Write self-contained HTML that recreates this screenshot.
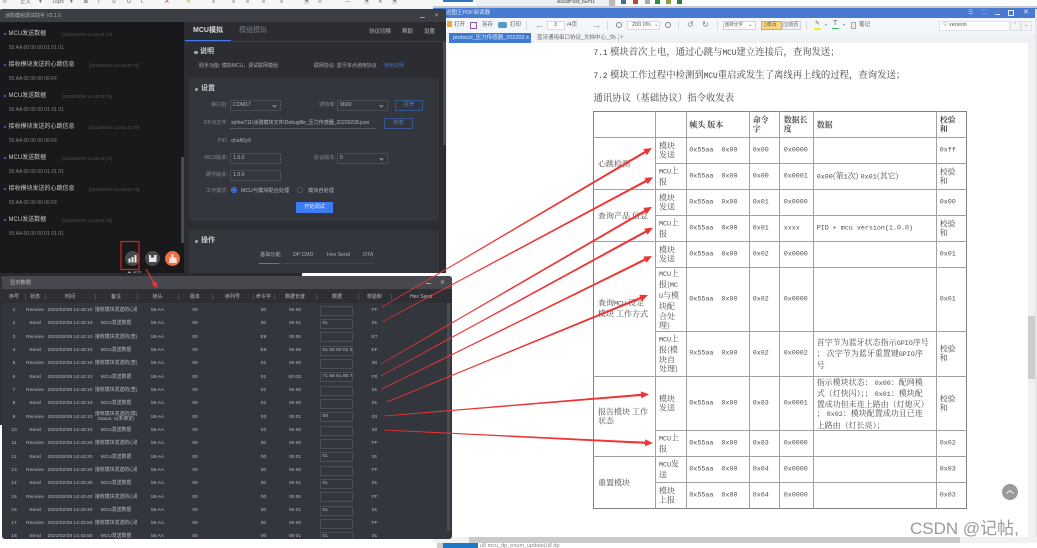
<!DOCTYPE html>
<html lang="zh"><head><meta charset="utf-8"><title>Debug</title>
<style>
html,body{margin:0;padding:0;background:#fff;width:1037px;height:548px;overflow:hidden}
#w{position:relative;width:1037px;height:548px;overflow:hidden;font-family:"Liberation Sans","Noto Sans CJK SC",sans-serif;filter:blur(.35px)}
.a{position:absolute;white-space:nowrap;line-height:10px}
.r{position:absolute}
.l{font-size:6px;color:#c8c8c8}
.t{font-size:4.5px;color:#555}
.x{font-size:5px;color:#858585;left:9px}
.dot{position:absolute;left:3.5px;width:2.4px;height:2.4px;border-radius:50%;background:#3f7bf5}
.f{font-size:5.5px;color:#a8abb0}
.lb{font-size:5.2px;color:#85888d;text-align:right;width:50px}
.h{font-size:7px;font-weight:bold;color:#ccc}
.d{position:absolute;width:3.5px;height:3.5px;background:#aaa;border-radius:50%}
.in{position:absolute;border:1px solid #4a4d54;color:#b5b8bc;font-size:5.2px;line-height:9px;padding-left:2px;box-sizing:border-box;height:11px}
.sel::after{content:"";position:absolute;right:4px;top:2.5px;width:2px;height:2px;border-right:1px solid #999;border-bottom:1px solid #999;transform:rotate(45deg)}
.btn{position:absolute;border:1px solid #35578f;box-sizing:border-box;color:#5c86d0;font-size:5.2px;text-align:center;line-height:9px}
.c{position:absolute;width:15px;height:15px;border-radius:50%;background:#48494c}
.ti{font-size:5.5px;color:#666}
.pt{font-size:5.5px;color:#555}
table{border-collapse:collapse;table-layout:fixed}
#dt{position:absolute;left:0;top:0;font-size:4.9px;color:#b9bcc0}
#dt td{height:13.33px;padding:0;text-align:center;white-space:nowrap;overflow:hidden;line-height:5.5px}
#dt tr{height:13.33px}
#dt b{display:block;font-weight:normal;width:33px;height:10px;margin:0 0 0 4px;border:1px solid #4b4e55;box-sizing:border-box;text-align:left;line-height:8px;padding-left:1.5px;overflow:hidden}
.hd{position:absolute;font-size:5px;color:#b9bcc0;text-align:center;line-height:10px;top:292px}
.sp{position:absolute;top:294px;width:1px;height:6px;background:#4b4e55}
.v{position:absolute;top:111px;height:398px;width:1px;background:#a0a0a0}
.hl{position:absolute;left:593px;width:374px;height:1px;background:#a0a0a0}
.hp{position:absolute;left:655px;width:312px;height:1px;background:#a0a0a0}
#pg{font-family:"Noto Serif CJK SC","Liberation Serif",serif;font-size:8px;color:#4c4c4c}
.rw{position:absolute;left:0;width:1037px}
.rw>span{position:absolute;top:calc(50% + .5px);transform:translateY(-50%);white-space:pre;line-height:9.3px}
#pg i{font-family:"Liberation Mono",monospace;font-style:normal;font-size:6.7px}
.m{font-family:"Liberation Mono",monospace;font-size:6.7px}
.c1{left:598px}.c2{left:659px}.c3{left:689.3px}.c4{left:752.7px}.c5{left:783.7px}.c6{left:816.7px}.c7{left:939.7px}
.p{position:absolute;left:593.5px;font-family:"Noto Serif CJK SC","Liberation Serif",serif;font-size:9.4px;color:#444;line-height:12px;white-space:nowrap}
.p i{font-family:"Liberation Mono",monospace;font-style:normal;font-size:7.8px}
</style></head><body><div id="w">

<!-- Word toolbar behind -->
<div class="r" style="left:0;top:0;width:440px;height:10px;background:#f6f6f6"></div>
<span class="a ti" style="left:2px;top:-3px">※</span>
<span class="a ti" style="left:20px;top:-3px">正文</span><span class="a ti" style="left:39px;top:-3px">▾</span>
<span class="a ti" style="left:52px;top:-3px">15px</span><span class="a ti" style="left:70px;top:-3px">▾</span>
<span class="a ti" style="left:84px;top:-3px;font-weight:bold">B</span><span class="a ti" style="left:98px;top:-3px;font-style:italic">I</span>
<span class="a ti" style="left:112px;top:-3px">S</span><span class="a ti" style="left:127px;top:-3px">U</span><span class="a ti" style="left:141px;top:-3px">I.</span>
<span class="a ti" style="left:165px;top:-3px;color:#c44">A</span><span class="a ti" style="left:186px;top:-3px;color:#b90">✎</span>
<span class="a ti" style="left:212px;top:-3px">≡</span><span class="a ti" style="left:232px;top:-3px">≡</span><span class="a ti" style="left:246px;top:-3px">≡</span><span class="a ti" style="left:262px;top:-3px">≡</span><span class="a ti" style="left:280px;top:-3px">≡</span>
<span class="a ti" style="left:304px;top:-3px">▣</span><span class="a ti" style="left:318px;top:-3px">∞</span><span class="a ti" style="left:332px;top:-3px">“</span><span class="a ti" style="left:345px;top:-3px">—</span>
<span class="a ti" style="left:364px;top:-3px">▣</span><span class="a ti" style="left:378px;top:-3px">✕</span><span class="a ti" style="left:392px;top:-3px">▣</span>

<!-- Keil toolbar -->
<div class="r" style="left:443px;top:0;width:30px;height:2px;background:#2f74c9"></div>
<div class="r" style="left:476px;top:0;width:140px;height:6px;background:#eceff3"></div>
<span class="a" style="left:557px;top:-3px;font-size:4.5px;color:#333">stm32F103_hw711</span>
<div class="r" style="left:609px;top:0;width:6px;height:6px;background:#bbb"></div>
<div class="r" style="left:621px;top:0;width:5px;height:4px;background:#47699e"></div>
<div class="r" style="left:633px;top:0;width:5px;height:4px;background:#b54a3a"></div>
<div class="r" style="left:645px;top:0;width:5px;height:4px;background:#aaa"></div>
<div class="r" style="left:655px;top:0;width:5px;height:4px;background:#2e8f3e"></div>
<div class="r" style="left:666px;top:0;width:5px;height:4px;background:#8aa040"></div>
<div class="r" style="left:677px;top:0;width:5px;height:4px;background:#2e7f4e"></div>

<!-- PDF window -->
<div class="r" style="left:433px;top:6px;width:604px;height:3px;background:#c8cace"></div>
<div class="r" style="left:433px;top:8px;width:604px;height:10px;background:#477ad0"></div>
<span class="a" style="left:446px;top:8px;font-size:5.5px;color:#dfe8f8">迅图王PDF阅读器</span>
<span class="a" style="left:968px;top:8px;font-size:6px;color:#bcd0f0">☰</span>
<span class="a" style="left:982px;top:8px;font-size:6px;color:#bcd0f0">⛶</span>
<div class="r" style="left:995px;top:14px;width:5px;height:1px;background:#cfdcf4"></div>
<div class="r" style="left:1008px;top:10px;width:6px;height:6px;border:1px solid #e5edfb;box-sizing:border-box"></div>
<span class="a" style="left:1023px;top:8px;font-size:7px;color:#e5edfb">✕</span>

<div class="r" style="left:433px;top:18px;width:604px;height:15px;background:#f3f6fa"></div>
<div class="r" style="left:433px;top:33px;width:604px;height:10px;background:#eef0f4"></div>
<div class="r" style="left:447px;top:21px;width:5px;height:6px;background:#e6a93c"></div>
<span class="a pt" style="left:454px;top:20px">打开</span>
<div class="r" style="left:470px;top:22px;width:7px;height:7px;border:1px solid #8a5ca8;box-sizing:border-box"></div>
<span class="a pt" style="left:482px;top:20px">另存</span>
<div class="r" style="left:498px;top:22px;width:9px;height:6px;background:#5a96c8;border-radius:2px"></div>
<span class="a pt" style="left:510px;top:20px">打印</span>
<div class="r" style="left:526px;top:21px;width:1px;height:9px;background:#d6d9de"></div>
<span class="a" style="left:535px;top:20px;font-size:9px;color:#888">←</span>
<div class="r" style="left:547px;top:21px;width:18px;height:9px;background:#fff;border:1px solid #d8dbe0;box-sizing:border-box"></div>
<span class="a pt" style="left:554px;top:20px">3</span>
<span class="a pt" style="left:567px;top:20px">/4页</span>
<span class="a" style="left:592px;top:20px;font-size:9px;color:#888">→</span>
<div class="r" style="left:607px;top:21px;width:1px;height:9px;background:#d6d9de"></div>
<div class="r" style="left:616px;top:22px;width:6px;height:6px;border:1px solid #888;border-radius:50%;box-sizing:border-box"></div>
<div class="r" style="left:627px;top:21px;width:33px;height:9px;background:#fff;border:1px solid #d8dbe0;box-sizing:border-box"></div>
<span class="a pt" style="left:632px;top:20px">200.0%</span><span class="a pt" style="left:654px;top:20px">⌄</span>
<div class="r" style="left:665px;top:22px;width:6px;height:6px;border:1px solid #888;border-radius:50%;box-sizing:border-box"></div>
<div class="r" style="left:678px;top:21px;width:1px;height:9px;background:#d6d9de"></div>
<span class="a" style="left:687px;top:20px;font-size:8px;color:#777">↺</span><span class="a" style="left:702px;top:20px;font-size:8px;color:#777">↻</span>
<div class="r" style="left:717px;top:21px;width:1px;height:9px;background:#d6d9de"></div>
<div class="r" style="left:723px;top:21px;width:33px;height:9px;background:#fff;border:1px solid #d0d3d8;box-sizing:border-box"></div>
<span class="a" style="left:725px;top:20px;font-size:4.5px;color:#555">图转文字</span><span class="a pt" style="left:748px;top:20px">⌄</span>
<div class="r" style="left:761px;top:21px;width:21px;height:9px;background:#fbd67c;border:1px solid #e0aa44;box-sizing:border-box"></div>
<span class="a" style="left:764px;top:20px;font-size:5px;color:#555">▯单页</span>
<div class="r" style="left:782px;top:21px;width:19px;height:9px;background:#eef0f3;border:1px solid #d0d3d8;box-sizing:border-box"></div>
<span class="a" style="left:783px;top:20px;font-size:5px;color:#666">▯▯双页</span>
<div class="r" style="left:806px;top:21px;width:1px;height:9px;background:#d6d9de"></div>
<div class="r" style="left:814px;top:28px;width:7px;height:2px;background:#f3ee20"></div>
<span class="a" style="left:815px;top:19px;font-size:6px;color:#666">✎</span><span class="a" style="left:825px;top:20px;font-size:4px;color:#888">▾</span>
<div class="r" style="left:832px;top:28px;width:7px;height:1px;background:#3fb85a"></div>
<span class="a" style="left:833px;top:19px;font-size:7px;color:#666">T</span><span class="a" style="left:843px;top:20px;font-size:4px;color:#888">▾</span>
<div class="r" style="left:851px;top:22px;width:5px;height:7px;background:#f6efcf;border:1px solid #aaa;box-sizing:border-box"></div>
<span class="a pt" style="left:859px;top:20px">笔记</span>
<div class="r" style="left:939px;top:21px;width:71px;height:10px;background:#fff;border:1px solid #dfe2e6;box-sizing:border-box"></div>
<span class="a" style="left:943px;top:20px;font-size:5.5px;color:#aaa">⚲</span>
<span class="a pt" style="left:949px;top:20px">version</span>
<div class="r" style="left:1010px;top:21px;width:11px;height:10px;background:#f3f4f6;border:1px solid #dfe2e6;box-sizing:border-box"></div>
<div class="r" style="left:1021px;top:21px;width:11px;height:10px;background:#f3f4f6;border:1px solid #dfe2e6;box-sizing:border-box"></div>
<span class="a" style="left:1013px;top:20px;font-size:5px;color:#999">⌃</span><span class="a" style="left:1024px;top:20px;font-size:5px;color:#999">⌄</span>

<div class="r" style="left:449px;top:33px;width:82px;height:10px;background:#3f7ad2"></div>
<span class="a" style="left:453px;top:33px;font-size:5.5px;color:#dfe9f8">protocol_压力传感器_202202…</span>
<span class="a" style="left:526px;top:33px;font-size:5px;color:#fff">×</span>
<div class="r" style="left:532px;top:33px;width:86px;height:10px;background:#f0f2f5;border-right:1px solid #d5d8dc"></div>
<span class="a" style="left:537px;top:33px;font-size:5.5px;color:#666">蓝牙通用串口协议_文档中心_文…</span>
<span class="a" style="left:613px;top:33px;font-size:5px;color:#666">×</span>
<span class="a" style="left:620px;top:33px;font-size:6px;color:#777">+</span>

<!-- Doc -->
<div class="r" style="left:433px;top:43px;width:14px;height:494px;background:#f0f0f0"></div>
<div class="p" style="top:45px"><i>7.1</i> 模块首次上电，通过心跳与<i>MCU</i>建立连接后，查询发送；</div>
<div class="p" style="top:68px"><i>7.2</i> 模块工作过程中检测到<i>MCU</i>重启或发生了离线再上线的过程，查询发送；</div>
<div class="p" style="top:91px">通讯协议（基础协议）指令收发表</div>

<div id="pg">
<i class="r" style="left:593px;top:111px;width:1px;height:398px;background:#808080"></i>
<i class="r" style="left:593px;top:111px;width:374px;height:1px;background:#808080"></i>
<i class="r" style="left:593px;top:508px;width:374px;height:1px;background:#808080"></i>
<i class="v" style="left:655px"></i><i class="v" style="left:686px"></i><i class="v" style="left:749px"></i><i class="v" style="left:779px"></i><i class="v" style="left:813px"></i><i class="v" style="left:936px"></i><i class="v" style="left:966px;background:#808080"></i>
<i class="hl" style="top:137px"></i><i class="hl" style="top:189px"></i><i class="hl" style="top:241px"></i><i class="hl" style="top:376px"></i><i class="hl" style="top:456px"></i>
<i class="hp" style="top:163px"></i><i class="hp" style="top:215px"></i><i class="hp" style="top:267px"></i><i class="hp" style="top:331px"></i><i class="hp" style="top:430px"></i><i class="hp" style="top:482px"></i>

<div class="rw" style="top:111px;height:26px;font-weight:bold"><span class="c3">帧头 版本</span><span class="c4">命令
字</span><span class="c5">数据长
度</span><span class="c6">数据</span><span class="c7">校验
和</span></div>

<div class="rw" style="top:137px;height:52px"><span class="c1">心跳检测</span></div>
<div class="rw" style="top:189px;height:52px"><span class="c1">查询产品 信息</span></div>
<div class="rw" style="top:241px;height:135px"><span class="c1">查询<i>MCU</i> 设定
模块 工作方式</span></div>
<div class="rw" style="top:376px;height:80px"><span class="c1">报告模块 工作
状态</span></div>
<div class="rw" style="top:456px;height:52px"><span class="c1">重置模块</span></div>

<div class="rw" style="top:137px;height:26px"><span class="c2">模块
发送</span><span class="c3 m">0x55aa  0x00</span><span class="c4 m">0x00</span><span class="c5 m">0x0000</span><span class="c7 m">0xff</span></div>
<div class="rw" style="top:163px;height:26px"><span class="c2"><i>MCU</i>上
报</span><span class="c3 m">0x55aa  0x00</span><span class="c4 m">0x00</span><span class="c5 m">0x0001</span><span class="c6"><i>0x00</i>(第<i>1</i>次) <i>0x01</i>(其它)</span><span class="c7">校验
和</span></div>
<div class="rw" style="top:189px;height:26px"><span class="c2">模块
发送</span><span class="c3 m">0x55aa  0x00</span><span class="c4 m">0x01</span><span class="c5 m">0x0000</span><span class="c7 m">0x00</span></div>
<div class="rw" style="top:215px;height:26px"><span class="c2"><i>MCU</i>上
报</span><span class="c3 m">0x55aa  0x00</span><span class="c4 m">0x01</span><span class="c5 m">xxxx</span><span class="c6 m">PID + mcu version(1.0.0)</span><span class="c7">校验
和</span></div>
<div class="rw" style="top:241px;height:26px"><span class="c2">模块
发送</span><span class="c3 m">0x55aa  0x00</span><span class="c4 m">0x02</span><span class="c5 m">0x0000</span><span class="c7 m">0x01</span></div>
<div class="rw" style="top:267px;height:64px"><span class="c2"><i>MCU</i>上
报(<i>MC</i>
<i>U</i>与模
块配
合处
理)</span><span class="c3 m">0x55aa  0x00</span><span class="c4 m">0x02</span><span class="c5 m">0x0000</span><span class="c7 m">0x01</span></div>
<div class="rw" style="top:331px;height:45px"><span class="c2"><i>MCU</i>上
报(模
块自
处理)</span><span class="c3 m">0x55aa  0x00</span><span class="c4 m">0x02</span><span class="c5 m">0x0002</span><span class="c6">首字节为蓝牙状态指示<i>GPIO</i>序号
； 次字节为蓝牙重置键<i>GPIO</i>序
号</span><span class="c7">校验
和</span></div>
<div class="rw" style="top:376px;height:54px"><span class="c2">模块
发送</span><span class="c3 m">0x55aa  0x00</span><span class="c4 m">0x03</span><span class="c5 m">0x0001</span><span class="c6">指示模块状态： <i>0x00</i>：配网模
式（灯快闪）；； <i>0x01</i>：模块配
置成功但未连上路由（灯熄灭）
； <i>0x02</i>：模块配置成功且已连
上路由（灯长亮）；</span><span class="c7">校验
和</span></div>
<div class="rw" style="top:430px;height:26px"><span class="c2"><i>MCU</i>上
报</span><span class="c3 m">0x55aa  0x00</span><span class="c4 m">0x03</span><span class="c5 m">0x0000</span><span class="c7 m">0x02</span></div>
<div class="rw" style="top:456px;height:26px"><span class="c2"><i>MCU</i>发
送</span><span class="c3 m">0x55aa  0x00</span><span class="c4 m">0x04</span><span class="c5 m">0x0000</span><span class="c7 m">0x03</span></div>
<div class="rw" style="top:482px;height:26px"><span class="c2">模块
上报</span><span class="c3 m">0x55aa  0x00</span><span class="c4 m">0x04</span><span class="c5 m">0x0000</span><span class="c7 m">0x03</span></div>
</div>

<!-- PDF scrollbars etc -->
<div class="r" style="left:1028px;top:43px;width:7px;height:499px;background:#f1f1f1"></div>
<div class="r" style="left:1028px;top:316px;width:7px;height:63px;background:#cdcdcd"></div>
<div class="r" style="left:1035px;top:9px;width:2px;height:533px;background:#e4e6ea"></div>
<div class="r" style="left:1002px;top:484px;width:16px;height:16px;border-radius:50%;background:#9a9a9a"></div>
<svg class="r" style="left:1002px;top:484px" width="16" height="16"><path d="M4.5 9.5 L8 6.5 L11.5 9.5" fill="none" stroke="#e8e8e8" stroke-width="1.2"/></svg>
<div class="r" style="left:433px;top:537px;width:604px;height:6px;background:#f1f1f1"></div>
<div class="r" style="left:469px;top:537px;width:491px;height:6px;background:#cacaca"></div>
<div class="r" style="left:443px;top:543px;width:35px;height:5px;background:#1e78c8"></div>
<div class="r" style="left:437px;top:543px;width:6px;height:5px;background:#ccc"></div>
<span class="a" style="left:480px;top:541px;font-size:5.5px;color:#888">u8 mcu_dp_enum_update(u8 dp</span>
<span class="a" style="left:910px;top:517px;font-size:17px;line-height:24px;color:#9a9a9a;font-family:'Liberation Sans','Noto Sans CJK SC',sans-serif">CSDN @记帖,</span>

<!-- Window 1 -->
<div class="r" style="left:0;top:10px;width:446px;height:263px;background:#2b2d33"></div>
<div class="r" style="left:0;top:9px;width:446px;height:13px;background:#3b3e44;border-radius:2px 2px 0 0"></div>
<span class="a" style="left:5px;top:11px;font-size:5px;color:#b0b3b8">涂鸦模组调试助手 V2.1.6</span>
<div class="r" style="left:420px;top:17px;width:5px;height:1px;background:#999"></div>
<span class="a" style="left:434px;top:11px;font-size:6px;color:#999">✕</span>
<div class="r" style="left:0;top:22px;width:184px;height:251px;background:#19191b"></div>
<div class="r" style="left:181px;top:157px;width:3px;height:86px;background:#4a4a4c"></div>

<i class="dot" style="top:33px"></i><span class="a l" style="left:8.5px;top:29px">MCU发送数据</span><span class="a t" style="left:62px;top:30px">[2022/02/28 14:43:28.74]</span><span class="a x" style="top:42.5px">55 AA 00 00 00 01 01 01</span>
<i class="dot" style="top:64px"></i><span class="a l" style="left:8.5px;top:60px">接收模块发送的心跳信息</span><span class="a t" style="left:89px;top:61px">[2022/02/28 14:43:30.73]</span><span class="a x" style="top:73.5px">55 AA 00 00 00 00 FF</span>
<i class="dot" style="top:95px"></i><span class="a l" style="left:8.5px;top:91px">MCU发送数据</span><span class="a t" style="left:62px;top:92px">[2022/02/28 14:43:38.75]</span><span class="a x" style="top:104.5px">55 AA 00 00 00 01 01 01</span>
<i class="dot" style="top:126px"></i><span class="a l" style="left:8.5px;top:122px">接收模块发送的心跳信息</span><span class="a t" style="left:89px;top:123px">[2022/02/28 14:43:40.73]</span><span class="a x" style="top:135.5px">55 AA 00 00 00 00 FF</span>
<i class="dot" style="top:157px"></i><span class="a l" style="left:8.5px;top:153px">MCU发送数据</span><span class="a t" style="left:62px;top:154px">[2022/02/28 14:43:48.74]</span><span class="a x" style="top:166.5px">55 AA 00 00 00 01 01 01</span>
<i class="dot" style="top:188px"></i><span class="a l" style="left:8.5px;top:184px">接收模块发送的心跳信息</span><span class="a t" style="left:89px;top:185px">[2022/02/28 14:43:50.73]</span><span class="a x" style="top:197.5px">55 AA 00 00 00 00 FF</span>
<i class="dot" style="top:219px"></i><span class="a l" style="left:8.5px;top:215px">MCU发送数据</span><span class="a t" style="left:62px;top:216px">[2022/02/28 14:43:58.75]</span><span class="a x" style="top:229px">55 AA 00 00 00 01 01 01</span>

<div class="c" style="left:124.5px;top:251px"></div>
<svg class="r" style="left:124.5px;top:251px" width="15" height="15"><path d="M3.5 7.5h2v4h-2zM6.5 6h2v5.5h-2zM9.5 4h2v7.5h-2z" fill="#e8e8e8"/></svg>
<div class="c" style="left:144.5px;top:251px"></div>
<svg class="r" style="left:144.5px;top:251px" width="15" height="15"><path d="M4 4h7.5v7H4z" fill="#e8e8e8"/><path d="M6 4h3v2.5H6z" fill="#48494c"/></svg>
<div class="c" style="left:164.5px;top:251px;background:#ef6f42"></div>
<svg class="r" style="left:164.5px;top:251px" width="15" height="15"><path d="M6.5 3h2v3.5h3V8.5l.5 3.5h-8l.5-3.5V6.5h2z" fill="#f7e3da"/></svg>
<span class="a" style="left:127px;top:269px;font-size:4.5px;color:#aaa">◆ 缓存</span>

<!-- right panel -->
<span class="a" style="left:193px;top:26px;font-size:7px;font-weight:bold;color:#d8dade">MCU模拟</span>
<span class="a" style="left:239px;top:26px;font-size:7px;color:#777a80">模组模拟</span>
<div class="r" style="left:185px;top:39.5px;width:46px;height:1.3px;background:#3f7bf5"></div>
<div class="r" style="left:185px;top:41px;width:261px;height:0.6px;background:#3b3e44"></div>
<span class="a" style="left:369px;top:27px;font-size:5.5px;color:#b5b8bc">协议切换</span>
<span class="a" style="left:402px;top:27px;font-size:5.5px;color:#b5b8bc">帮助</span>
<span class="a" style="left:424px;top:27px;font-size:5.5px;color:#b5b8bc">设置</span>
<div class="r" style="left:443px;top:42px;width:3px;height:103px;background:#4a4c52"></div>

<i class="d" style="left:194px;top:50.5px"></i><span class="a h" style="left:200px;top:47px">说明</span>
<span class="a f" style="left:199px;top:61px;font-size:5px">助手功能: 模拟MCU，调试联网模组</span>
<span class="a f" style="left:314px;top:61px;font-size:5px">联网协议: 蓝牙单点通用协议</span>
<span class="a f" style="left:384px;top:61px;font-size:5px;color:#3f6fc8">使用说明</span>

<div class="r" style="left:189px;top:78px;width:250px;height:143px;background:#33363d;border-radius:3px"></div>
<i class="d" style="left:194.5px;top:87.5px"></i><span class="a h" style="left:201px;top:84px">设置</span>
<span class="a lb" style="left:178px;top:100px">串口名:</span>
<div class="in sel" style="left:230px;top:100px;width:50.5px">COM17</div>
<span class="a lb" style="left:286px;top:100px">波特率:</span>
<div class="in sel" style="left:337px;top:100px;width:50.5px">9600</div>
<div class="btn" style="left:395px;top:99.5px;width:28px;height:11px">打开</div>
<span class="a lb" style="left:178px;top:118px">DP点文件:</span>
<span class="a" style="left:231px;top:118px;font-size:5px;color:#b5b8bc">xp\hw711\涂鸦模块文件\Debugfile_压力传感器_20220228.json</span>
<div class="r" style="left:230px;top:128px;width:146px;height:.7px;background:#55585e"></div>
<div class="btn" style="left:384px;top:117.5px;width:28.5px;height:11px">浏览</div>
<span class="a lb" style="left:178px;top:136px">PID:</span>
<span class="a" style="left:231px;top:136px;font-size:5.2px;color:#a8abb0">qhaft0y9</span>
<span class="a lb" style="left:178px;top:153px">MCU版本:</span>
<div class="in" style="left:230px;top:153px;width:50.5px">1.0.0</div>
<span class="a lb" style="left:286px;top:153px">协议版本:</span>
<div class="in sel" style="left:337px;top:153px;width:50.5px">0</div>
<span class="a lb" style="left:178px;top:170px">硬件版本:</span>
<div class="in" style="left:230px;top:170px;width:50.5px">1.0.0</div>
<span class="a lb" style="left:178px;top:185.5px">工作模式:</span>
<div class="r" style="left:231px;top:187px;width:6px;height:6px;border-radius:50%;border:1px solid #3f7bf5;box-sizing:border-box;background:radial-gradient(#3f7bf5 50%,#33363d 60%)"></div>
<span class="a" style="left:241px;top:185.5px;font-size:5.2px;color:#b5b8bc">MCU与模块配合处理</span>
<div class="r" style="left:297px;top:187px;width:6px;height:6px;border-radius:50%;border:1px solid #5a5d63;box-sizing:border-box"></div>
<span class="a" style="left:308px;top:185.5px;font-size:5.2px;color:#b5b8bc">模块自处理</span>
<div class="r" style="left:296px;top:202px;width:37px;height:10.5px;background:#3f7bf5;color:#e6eefc;font-size:5.2px;text-align:center;line-height:10px">开始调试</div>

<div class="r" style="left:189px;top:230px;width:250px;height:43px;background:#33363d;border-radius:3px 3px 0 0"></div>
<i class="d" style="left:194.5px;top:239.5px"></i><span class="a h" style="left:201px;top:236px">操作</span>
<span class="a f" style="left:260px;top:250px;font-size:5.2px">基础功能</span>
<span class="a f" style="left:293px;top:250px;font-size:5.2px">DP CMD</span>
<span class="a f" style="left:327px;top:250px;font-size:5.2px">Hex Send</span>
<span class="a f" style="left:363px;top:250px;font-size:5.2px">OTA</span>
<div class="r" style="left:259px;top:263px;width:114px;height:.6px;background:#43464d"></div>
<div class="r" style="left:259px;top:262.5px;width:20px;height:1.2px;background:#3f7bf5"></div>

<div class="r" style="left:0;top:273px;width:302px;height:4px;background:#2a2a2c"></div>
<div class="r" style="left:302px;top:273px;width:144px;height:3px;background:#fff"></div>

<!-- Window 2 -->
<div class="r" style="left:0;top:273px;width:2px;height:152px;background:#2f3034"></div>
<div class="r" style="left:2px;top:276px;width:450px;height:263px;background:#33363c;border-radius:3px"></div>
<div class="r" style="left:2px;top:276px;width:450px;height:13px;background:#47494f;border-radius:3px 3px 0 0"></div>
<div class="r" style="left:2px;top:289px;width:450px;height:14px;background:#2d2f34"></div>
<span class="a" style="left:10px;top:277.5px;font-size:5.2px;color:#c2c4c8">显示数据</span>
<div class="r" style="left:426px;top:283px;width:5px;height:1px;background:#aaa"></div>
<span class="a" style="left:440px;top:277.5px;font-size:6px;color:#bbb">✕</span>

<span class="hd" style="left:3px;width:22px">序号</span><i class="sp" style="left:25px"></i>
<span class="hd" style="left:25px;width:20px">状态</span><i class="sp" style="left:45px"></i>
<span class="hd" style="left:45px;width:50px">时间</span><i class="sp" style="left:95px"></i>
<span class="hd" style="left:95px;width:42px">备注</span><i class="sp" style="left:137px"></i>
<span class="hd" style="left:137px;width:41px">帧头</span><i class="sp" style="left:178px"></i>
<span class="hd" style="left:178px;width:34px">版本</span><i class="sp" style="left:212px"></i>
<span class="hd" style="left:212px;width:41px">序列号</span><i class="sp" style="left:253px"></i>
<span class="hd" style="left:253px;width:21px">命令字</span><i class="sp" style="left:274px"></i>
<span class="hd" style="left:274px;width:42px">数据长度</span><i class="sp" style="left:316px"></i>
<span class="hd" style="left:316px;width:42px">数据</span><i class="sp" style="left:358px"></i>
<span class="hd" style="left:358px;width:33px">校验和</span><i class="sp" style="left:391px"></i>
<span class="hd" style="left:391px;width:60px">Hex Send</span>

<div class="r" style="left:3px;top:304px;width:449px;height:234px;overflow:hidden">
<table id="dt" style="width:444px">
<colgroup><col style="width:22px"><col style="width:20px"><col style="width:50px"><col style="width:42px"><col style="width:41px"><col style="width:34px"><col style="width:41px"><col style="width:21px"><col style="width:42px"><col style="width:42px"><col style="width:33px"><col style="width:56px"></colgroup>
<tr><td>1</td><td>Receive</td><td>2022/02/28 14:43:10</td><td>接收模块发送的心跳</td><td>55 AA</td><td>00</td><td></td><td>00</td><td>00 00</td><td><b></b></td><td>FF</td><td></td></tr>
<tr><td>2</td><td>Send</td><td>2022/02/28 14:43:10</td><td>MCU发送数据</td><td>55 AA</td><td>00</td><td></td><td>00</td><td>00 01</td><td><b>01</b></td><td>01</td><td></td></tr>
<tr><td>3</td><td>Receive</td><td>2022/02/28 14:43:10</td><td>接收模块发送的(查)</td><td>55 AA</td><td>00</td><td></td><td>E8</td><td>00 00</td><td><b></b></td><td>E7</td><td></td></tr>
<tr><td>4</td><td>Send</td><td>2022/02/28 14:43:10</td><td>MCU发送数据</td><td>55 AA</td><td>00</td><td></td><td>E8</td><td>00 06</td><td><b>01 00 00 01 00</b></td><td>EF</td><td></td></tr>
<tr><td>5</td><td>Receive</td><td>2022/02/28 14:43:10</td><td>接收模块发送的(查)</td><td>55 AA</td><td>00</td><td></td><td>01</td><td>00 00</td><td><b></b></td><td>00</td><td></td></tr>
<tr><td>6</td><td>Send</td><td>2022/02/28 14:43:10</td><td>MCU发送数据</td><td>55 AA</td><td>00</td><td></td><td>01</td><td>00 0D</td><td><b>71 68 61 66 74</b></td><td>F0</td><td></td></tr>
<tr><td>7</td><td>Receive</td><td>2022/02/28 14:43:10</td><td>接收模块发送的(查)</td><td>55 AA</td><td>00</td><td></td><td>02</td><td>00 00</td><td><b></b></td><td>01</td><td></td></tr>
<tr><td>8</td><td>Send</td><td>2022/02/28 14:43:10</td><td>MCU发送数据</td><td>55 AA</td><td>00</td><td></td><td>02</td><td>00 00</td><td><b></b></td><td>01</td><td></td></tr>
<tr><td>9</td><td>Receive</td><td>2022/02/28 14:43:10</td><td>接收模块发送的(模)<br>Status: 0(未绑定)</td><td>55 AA</td><td>00</td><td></td><td>03</td><td>00 01</td><td><b>00</b></td><td>03</td><td></td></tr>
<tr><td>10</td><td>Send</td><td>2022/02/28 14:43:10</td><td>MCU发送数据</td><td>55 AA</td><td>00</td><td></td><td>03</td><td>00 00</td><td><b></b></td><td>02</td><td></td></tr>
<tr><td>11</td><td>Receive</td><td>2022/02/28 14:43:20</td><td>接收模块发送的心跳</td><td>55 AA</td><td>00</td><td></td><td>00</td><td>00 00</td><td><b></b></td><td>FF</td><td></td></tr>
<tr><td>12</td><td>Send</td><td>2022/02/28 14:43:20</td><td>MCU发送数据</td><td>55 AA</td><td>00</td><td></td><td>00</td><td>00 01</td><td><b>01</b></td><td>01</td><td></td></tr>
<tr><td>13</td><td>Receive</td><td>2022/02/28 14:43:30</td><td>接收模块发送的心跳</td><td>55 AA</td><td>00</td><td></td><td>00</td><td>00 00</td><td><b></b></td><td>FF</td><td></td></tr>
<tr><td>14</td><td>Send</td><td>2022/02/28 14:43:30</td><td>MCU发送数据</td><td>55 AA</td><td>00</td><td></td><td>00</td><td>00 01</td><td><b>01</b></td><td>01</td><td></td></tr>
<tr><td>15</td><td>Receive</td><td>2022/02/28 14:43:40</td><td>接收模块发送的心跳</td><td>55 AA</td><td>00</td><td></td><td>00</td><td>00 00</td><td><b></b></td><td>FF</td><td></td></tr>
<tr><td>16</td><td>Send</td><td>2022/02/28 14:43:40</td><td>MCU发送数据</td><td>55 AA</td><td>00</td><td></td><td>00</td><td>00 01</td><td><b>01</b></td><td>01</td><td></td></tr>
<tr><td>17</td><td>Receive</td><td>2022/02/28 14:43:50</td><td>接收模块发送的心跳</td><td>55 AA</td><td>00</td><td></td><td>00</td><td>00 00</td><td><b></b></td><td>FF</td><td></td></tr>
<tr><td>18</td><td>Send</td><td>2022/02/28 14:43:50</td><td>MCU发送数据</td><td>55 AA</td><td>00</td><td></td><td>00</td><td>00 01</td><td><b>01</b></td><td>01</td><td></td></tr>
</table>
</div>
<div class="r" style="left:447px;top:303px;width:3px;height:228px;background:#4a4c52"></div>

<!-- Arrows: tapered polygons, thin at the data row and thick at the head -->
<svg class="r" style="left:0;top:0" width="1037" height="548">
<rect x="121" y="241.5" width="18" height="28" fill="none" stroke="#e02020" stroke-width="1.2"/>
<g fill="#ee3535">
<polygon transform="translate(382 307) rotate(-30.5)" points="0,-.35 305.3,-1.1 305.3,-3.5 313.3,0 305.3,3.5 305.3,1.1 0,.35"/>
<polygon transform="translate(382 322) rotate(-28.1)" points="0,-.35 299.4,-1.1 299.4,-3.5 307.4,0 299.4,3.5 299.4,1.1 0,.35"/>
<polygon transform="translate(381 364) rotate(-30.1)" points="0,-.35 305.2,-1.1 305.2,-3.5 313.2,0 305.2,3.5 305.2,1.1 0,.35"/>
<polygon transform="translate(381 376) rotate(-28.6)" points="0,-.35 301.7,-1.1 301.7,-3.5 309.7,0 301.7,3.5 301.7,1.1 0,.35"/>
<polygon transform="translate(382 389) rotate(-26.2)" points="0,-.35 293,-1.1 293,-3.5 301,0 293,3.5 293,1.1 0,.35"/>
<polygon transform="translate(387 402) rotate(-22.3)" points="0,-.35 274.1,-1.1 274.1,-3.5 282.1,0 274.1,3.5 274.1,1.1 0,.35"/>
<polygon transform="translate(384 416) rotate(-4.7)" points="0,-.35 257.9,-1.1 257.9,-3.5 265.9,0 257.9,3.5 257.9,1.1 0,.35"/>
<polygon transform="translate(384 430) rotate(2.8)" points="0,-.35 261.3,-1.1 261.3,-3.5 269.3,0 261.3,3.5 261.3,1.1 0,.35"/>
<polygon transform="translate(146 269) rotate(60)" points="0,-.4 16,-.8 16,-3 22,0 16,3 16,.8 0,.4"/>
</g>
</svg>
</div></body></html>
